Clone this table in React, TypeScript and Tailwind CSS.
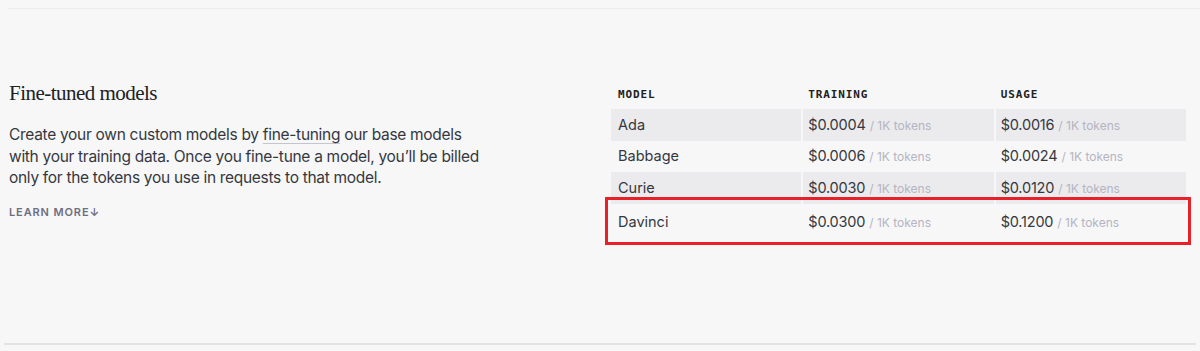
import React from 'react';

type Row = { model: string; training: string; usage: string };

const rows: Row[] = [
  { model: 'Ada', training: '$0.0004', usage: '$0.0016' },
  { model: 'Babbage', training: '$0.0006', usage: '$0.0024' },
  { model: 'Curie', training: '$0.0030', usage: '$0.0120' },
  { model: 'Davinci', training: '$0.0300', usage: '$0.1200' },
];

const sans = { fontFamily: 'Inter, "Liberation Sans", sans-serif' };

const Price: React.FC<{ value: string }> = ({ value }) => (
  <span className="text-[14.5px] tracking-[-0.2px] text-[#353740]">
    {value}
    <span className="ml-1 text-[12px] tracking-normal text-[#b4b4c2]">/ 1K tokens</span>
  </span>
);

const App: React.FC = () => {
  return (
    <div className="h-[351px] w-[1200px] overflow-hidden bg-[#f7f7f8]" style={sans}>
      <div className="ml-2 mt-2 h-[1px] bg-[#ececf1]" />

      <div className="flex h-[334px] pt-[68px]">
        {/* left copy */}
        <div className="w-[611px] pl-[9px] pt-[2px]">
          <h2
            className="text-[21px] leading-[28px] tracking-[-0.025em] text-[#202123]"
            style={{ fontFamily: '"Liberation Serif", serif' }}
          >
            Fine-tuned models
          </h2>
          <p className="mt-[17px] w-[470px] text-[15.5px] leading-[21.5px] tracking-[-0.3px] text-[#353740]">
            Create your own custom models by{' '}
            <span className="underline decoration-[#c5c5d2] underline-offset-[3px]">fine-tuning</span> our base models
            with your training data. Once you fine-tune a model, you’ll be billed only for the tokens you use in requests
            to that model.
          </p>
          <div className="mt-[15px] text-[11px] font-semibold tracking-[0.08em] text-[#6e6e80]">LEARN MORE↓</div>
        </div>

        {/* pricing table */}
        <div className="relative w-[575px]">
          <div
            className="grid grid-cols-3 gap-x-[2px] text-[11px] font-bold tracking-[0.08em] text-[#202123]"
            style={{ fontFamily: '"DejaVu Sans Mono", monospace' }}
          >
            <div className="flex h-[32px] items-center px-[7px] pt-[4px]">MODEL</div>
            <div className="flex h-[32px] items-center px-[5px] pt-[4px]">TRAINING</div>
            <div className="flex h-[32px] items-center px-[5px] pt-[4px]">USAGE</div>
          </div>
          {rows.map((r, i) => {
            const bg = i % 2 === 0 ? 'bg-[#ebebed]' : 'bg-transparent';
            const h = i === rows.length - 1 ? 'h-[36px]' : 'h-[31.5px]';
            return (
              <div key={r.model} className="grid grid-cols-3 gap-x-[2px]">
                <div className={`flex items-center px-[7px] text-[14.5px] text-[#353740] ${h} ${bg}`}>{r.model}</div>
                <div className={`flex items-center px-[5px] ${h} ${bg}`}>
                  <Price value={r.training} />
                </div>
                <div className={`flex items-center px-[5px] ${h} ${bg}`}>
                  <Price value={r.usage} />
                </div>
              </div>
            );
          })}
          <div className="pointer-events-none absolute left-[-6px] top-[120px] h-[48px] w-[586px] border-[3px] border-[#e8202a]" />
        </div>
      </div>

      <div className="ml-1 h-[2px] w-[1192px] bg-[#e3e3e6]" />
    </div>
  );
};

export default App;
